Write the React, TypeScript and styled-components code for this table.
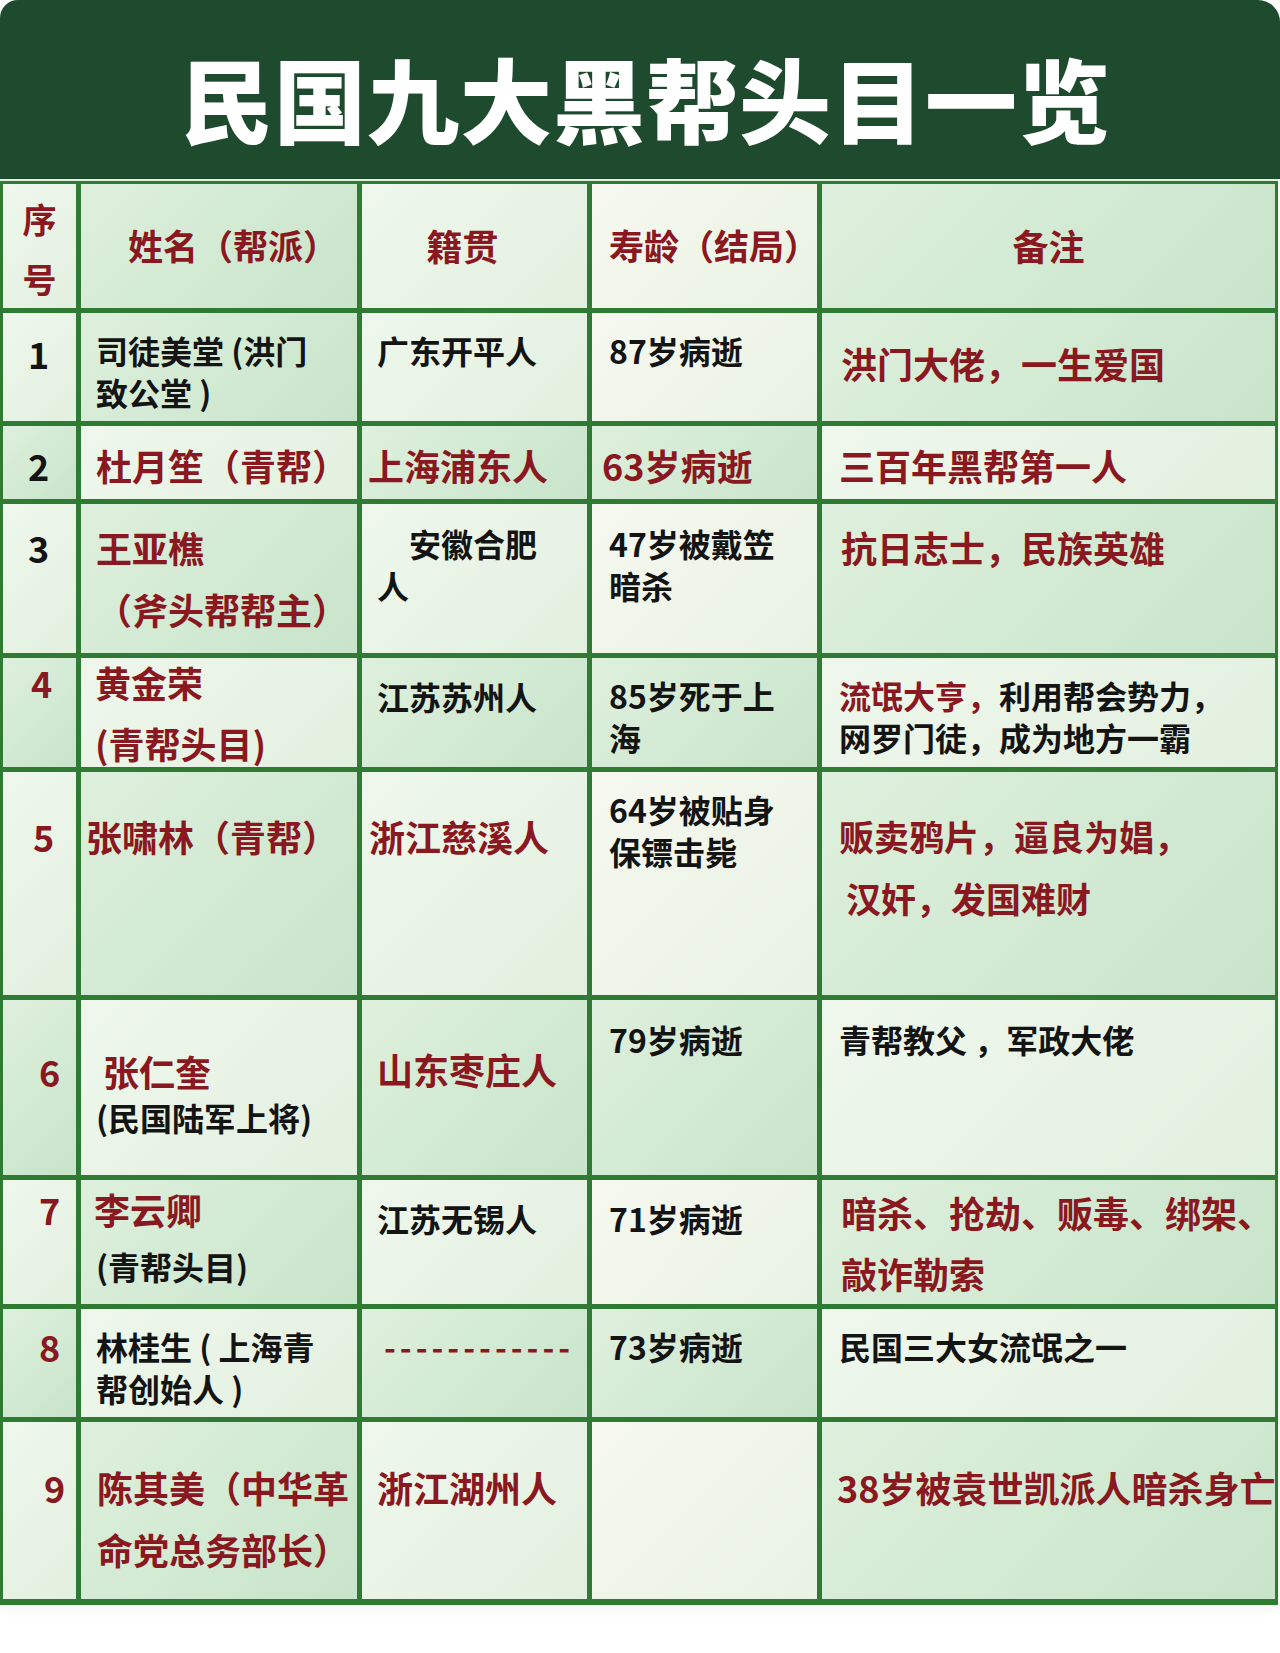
import styled, { createGlobalStyle } from "styled-components";

type Tone = "light" | "mid" | "cream";
type Seg = { t: string; red?: boolean };
type LineSpec = string | { t: string | Seg[]; red?: boolean; size?: number; indent?: number };
type CellSpec = {
  tone: Tone;
  pt?: number;
  pl?: number;
  pr?: number;
  gap?: number;
  red?: boolean;
  size?: number;
  center?: boolean;
  dashes?: boolean;
  clip?: boolean;
  lines: LineSpec[];
};
type RowSpec = { h: number; cells: CellSpec[] };

const RED = "#8a1820";
const INK = "#141414";

const rows: RowSpec[] = [
  {
    h: 124,
    cells: [
      { tone: "light", center: true, pt: 14, gap: 18, red: true, size: 34, lines: ["序", "号"] },
      { tone: "mid", center: true, pt: 40, pl: 28, red: true, size: 35, lines: ["姓名（帮派）"] },
      { tone: "light", center: true, pt: 40, pr: 24, red: true, size: 36, lines: ["籍贯"] },
      { tone: "cream", center: true, pt: 40, pl: 17, red: true, size: 35, lines: ["寿龄（结局）"] },
      { tone: "mid", center: true, pt: 40, red: true, size: 36, lines: ["备注"] },
    ],
  },
  {
    h: 108,
    cells: [
      { tone: "light", pt: 19, pl: 25, size: 36, lines: ["1"] },
      { tone: "mid", pt: 16, pl: 15, lines: ["司徒美堂 (洪门", "致公堂 )"] },
      { tone: "light", pt: 16, pl: 15, lines: ["广东开平人"] },
      { tone: "cream", pt: 16, pl: 17, lines: ["87岁病逝"] },
      { tone: "mid", pt: 29, pl: 19, red: true, size: 36, lines: ["洪门大佬，一生爱国"] },
    ],
  },
  {
    h: 73,
    cells: [
      { tone: "mid", pt: 18, pl: 25, size: 36, lines: ["2"] },
      { tone: "light", pt: 18, pl: 15, red: true, size: 36, lines: ["杜月笙（青帮）"] },
      { tone: "mid", pt: 18, pl: 6, red: true, size: 36, lines: ["上海浦东人"] },
      { tone: "mid", pt: 18, pl: 10, red: true, size: 36, lines: ["63岁病逝"] },
      { tone: "light", pt: 18, pl: 17, red: true, size: 36, lines: ["三百年黑帮第一人"] },
    ],
  },
  {
    h: 149,
    cells: [
      { tone: "light", pt: 22, pl: 25, size: 36, lines: ["3"] },
      { tone: "mid", pt: 22, pl: 15, gap: 20, red: true, size: 36, lines: ["王亚樵", "（斧头帮帮主）"] },
      { tone: "light", pt: 18, pl: 15, lines: ["　安徽合肥", "人"] },
      { tone: "cream", pt: 18, pl: 17, lines: ["47岁被戴笠", "暗杀"] },
      { tone: "mid", pt: 22, pl: 19, red: true, size: 36, lines: ["抗日志士，民族英雄"] },
    ],
  },
  {
    h: 109,
    cells: [
      { tone: "mid", pt: 3, pl: 28, red: true, size: 36, lines: ["4"] },
      { tone: "light", pt: 3, pl: 14, gap: 19, red: true, size: 36, lines: ["黄金荣", "(青帮头目)"] },
      { tone: "mid", pt: 17, pl: 15, lines: ["江苏苏州人"] },
      { tone: "mid", pt: 16, pl: 17, lines: ["85岁死于上", "海"] },
      {
        tone: "light",
        pt: 16,
        pl: 17,
        lines: [{ t: [{ t: "流氓大亨，", red: true }, { t: "利用帮会势力，" }] }, "网罗门徒，成为地方一霸"],
      },
    ],
  },
  {
    h: 223,
    cells: [
      { tone: "light", pt: 43, pl: 30, red: true, size: 36, lines: ["5"] },
      { tone: "mid", pt: 43, pl: 5, red: true, size: 36, lines: ["张啸林（青帮）"] },
      { tone: "light", pt: 43, pl: 7, red: true, size: 36, lines: ["浙江慈溪人"] },
      { tone: "cream", pt: 16, pl: 17, lines: ["64岁被贴身", "保镖击毙"] },
      {
        tone: "mid",
        pt: 43,
        pl: 17,
        gap: 20,
        red: true,
        size: 35,
        lines: ["贩卖鸦片，逼良为娼，", { t: "汉奸，发国难财", indent: 7 }],
      },
    ],
  },
  {
    h: 175,
    cells: [
      { tone: "mid", pt: 50, pl: 36, red: true, size: 36, lines: ["6"] },
      {
        tone: "light",
        pt: 50,
        pl: 15,
        gap: 4,
        lines: [{ t: "张仁奎", red: true, size: 36, indent: 7 }, "(民国陆军上将)"],
      },
      { tone: "mid", pt: 48, pl: 15, red: true, size: 36, lines: ["山东枣庄人"] },
      { tone: "mid", pt: 18, pl: 17, lines: ["79岁病逝"] },
      { tone: "light", pt: 18, pl: 17, lines: ["青帮教父 ，军政大佬"] },
    ],
  },
  {
    h: 124,
    cells: [
      { tone: "light", pt: 8, pl: 36, red: true, size: 36, lines: ["7"] },
      {
        tone: "mid",
        pt: 8,
        pl: 13,
        gap: 15,
        lines: [{ t: "李云卿", red: true, size: 36 }, { t: "(青帮头目)", indent: 2 }],
      },
      { tone: "light", pt: 17, pl: 15, lines: ["江苏无锡人"] },
      { tone: "cream", pt: 17, pl: 17, lines: ["71岁病逝"] },
      {
        tone: "mid",
        pt: 11,
        pl: 19,
        gap: 19,
        red: true,
        size: 36,
        lines: ["暗杀、抢劫、贩毒、绑架、", { t: "敲诈勒索", indent: -2 }],
      },
    ],
  },
  {
    h: 108,
    cells: [
      { tone: "mid", pt: 16, pl: 36, red: true, size: 36, lines: ["8"] },
      { tone: "light", pt: 16, pl: 15, lines: ["林桂生 ( 上海青", "帮创始人 )"] },
      { tone: "mid", pt: 16, pl: 22, dashes: true, red: true, lines: ["------------"] },
      { tone: "mid", pt: 16, pl: 17, lines: ["73岁病逝"] },
      { tone: "light", pt: 16, pl: 17, lines: ["民国三大女流氓之一"] },
    ],
  },
  {
    h: 177,
    cells: [
      { tone: "light", pt: 44, pl: 41, red: true, size: 36, lines: ["9"] },
      { tone: "mid", pt: 44, pl: 16, gap: 20, red: true, size: 36, lines: ["陈其美（中华革", "命党总务部长）"] },
      { tone: "light", pt: 44, pl: 15, red: true, size: 36, lines: ["浙江湖州人"] },
      { tone: "cream", lines: [] },
      { tone: "mid", pt: 44, pl: 15, clip: true, red: true, size: 36, lines: ["38岁被袁世凯派人暗杀身亡"] },
    ],
  },
];

const tones: Record<Tone, string> = {
  light: "linear-gradient(135deg, #eff7ec 0%, #e2f0df 100%)",
  mid: "linear-gradient(135deg, #def0dd 0%, #c8e4ca 100%)",
  cream: "linear-gradient(135deg, #f6f8ef 0%, #e9f2e4 100%)",
};

export default function App() {
  return (
    <>
      <GlobalStyle />
      <Page>
        <Banner>
          <Title>民国九大黑帮头目一览</Title>
        </Banner>
        <Table>
          {rows.map((row, ri) => (
            <Row key={ri} $h={row.h}>
              {row.cells.map((cell, ci) => (
                <Cell
                  key={ci}
                  $tone={cell.tone}
                  $pt={cell.pt ?? 0}
                  $pl={cell.pl ?? 0}
                  $pr={cell.pr ?? 0}
                  $center={!!cell.center}
                  $clip={!!cell.clip}
                >
                  {cell.lines.map((line, li) => {
                    const spec = typeof line === "string" ? { t: line } : line;
                    const red = spec.red ?? cell.red ?? false;
                    return (
                      <Line
                        key={li}
                        $size={spec.size ?? cell.size ?? 32}
                        $red={red}
                        $indent={spec.indent ?? 0}
                        $gap={li > 0 ? cell.gap ?? 0 : 0}
                        $dashes={!!cell.dashes}
                      >
                        {typeof spec.t === "string"
                          ? spec.t
                          : spec.t.map((seg, si) => (
                              <Seg key={si} $red={!!seg.red}>
                                {seg.t}
                              </Seg>
                            ))}
                      </Line>
                    );
                  })}
                </Cell>
              ))}
            </Row>
          ))}
        </Table>
      </Page>
    </>
  );
}

const GlobalStyle = createGlobalStyle`
  html, body {
    margin: 0;
    padding: 0;
    background: #ffffff;
  }
  body {
    font-family: "Noto Sans CJK SC", "Noto Sans", sans-serif;
  }
`;

const Page = styled.div`
  width: 1280px;
  height: 1653px;
  background: #ffffff;
`;

const Banner = styled.header`
  height: 179px;
  display: flex;
  align-items: center;
  justify-content: center;
  padding: 14px 0 0 12px;
  box-sizing: border-box;
  background: #1e4a2d;
  border-radius: 18px 22px 0 0;
`;

const Title = styled.h1`
  margin: 0;
  color: #ffffff;
  font-family: "Noto Sans CJK SC", sans-serif;
  font-size: 92px;
  font-weight: 900;
  letter-spacing: 1px;
  line-height: 1;
`;

const Table = styled.div`
  width: 1278px;
  display: flex;
  flex-direction: column;
  gap: 5px;
  padding: 3px 3px 6px 3px;
  box-sizing: border-box;
  border-top: 2px solid #e3f0e1;
  background: #2f7b34;
  box-shadow: 0 6px 10px rgba(0, 0, 0, 0.04);
`;

const Row = styled.div<{ $h: number }>`
  display: grid;
  grid-template-columns: 73px 276px 225px 225px 453px;
  gap: 5px;
  height: ${(p) => p.$h}px;
`;

const Cell = styled.div<{
  $tone: Tone;
  $pt: number;
  $pl: number;
  $pr: number;
  $center: boolean;
  $clip: boolean;
}>`
  background: ${(p) => tones[p.$tone]};
  padding: ${(p) => p.$pt}px ${(p) => p.$pr}px 0 ${(p) => p.$pl}px;
  text-align: ${(p) => (p.$center ? "center" : "left")};
  overflow: ${(p) => (p.$clip ? "hidden" : "visible")};
  min-width: 0;
  box-sizing: border-box;
`;

const Line = styled.div<{ $size: number; $red: boolean; $indent: number; $gap: number; $dashes: boolean }>`
  height: 42px;
  line-height: 42px;
  margin-top: ${(p) => p.$gap}px;
  padding-left: ${(p) => p.$indent}px;
  font-size: ${(p) => p.$size}px;
  font-weight: 700;
  color: ${(p) => (p.$red ? RED : INK)};
  white-space: nowrap;
  letter-spacing: ${(p) => (p.$dashes ? "4px" : "0")};
`;

const Seg = styled.span<{ $red: boolean }>`
  color: ${(p) => (p.$red ? RED : INK)};
`;
